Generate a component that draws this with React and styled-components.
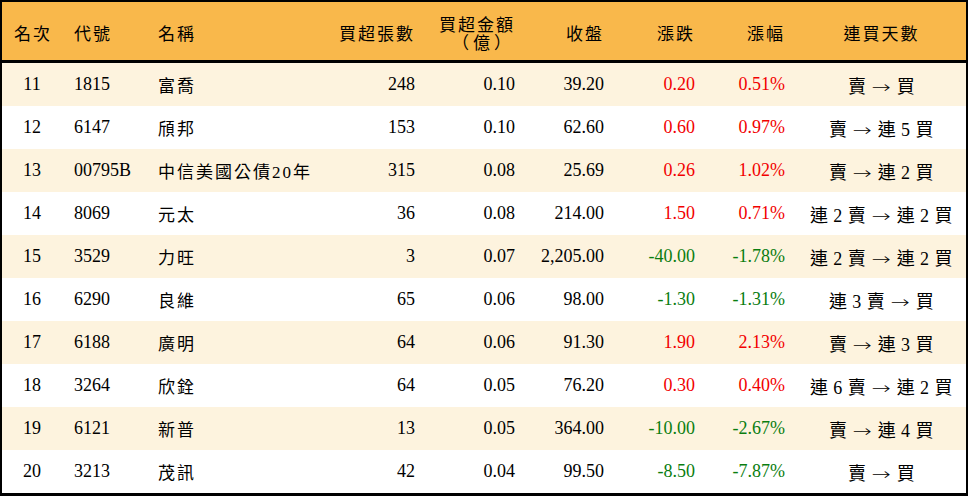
import React from 'react';
import styled, { createGlobalStyle } from 'styled-components';

const GlobalStyle = createGlobalStyle`
    html, body {
        margin: 0;
        padding: 0;
        background: #ffffff;
    }
    body {
        font-family: "Liberation Serif", "Noto Sans CJK TC", serif;
    }
`;

const columns = [
    { key: 'rank', label: '名次', width: 60, align: 'center' },
    { key: 'code', label: '代號', width: 84, align: 'left' },
    { key: 'name', label: '名稱', width: 174, align: 'left' },
    { key: 'lots', label: '買超張數', width: 107, align: 'right' },
    { key: 'amount', label: ['買超金額', '（億）'], width: 100, align: 'right' },
    { key: 'close', label: '收盤', width: 89, align: 'right' },
    { key: 'change', label: '漲跌', width: 91, align: 'right' },
    { key: 'pct', label: '漲幅', width: 90, align: 'right' },
    { key: 'streak', label: '連買天數', width: 169, align: 'center' },
];

const rows = [
    [11, '1815', '富喬', '248', '0.10', '39.20', '0.20', '0.51%', '賣 → 買'],
    [12, '6147', '頎邦', '153', '0.10', '62.60', '0.60', '0.97%', '賣 → 連 5 買'],
    [13, '00795B', '中信美國公債20年', '315', '0.08', '25.69', '0.26', '1.02%', '賣 → 連 2 買'],
    [14, '8069', '元太', '36', '0.08', '214.00', '1.50', '0.71%', '連 2 賣 → 連 2 買'],
    [15, '3529', '力旺', '3', '0.07', '2,205.00', '-40.00', '-1.78%', '連 2 賣 → 連 2 買'],
    [16, '6290', '良維', '65', '0.06', '98.00', '-1.30', '-1.31%', '連 3 賣 → 買'],
    [17, '6188', '廣明', '64', '0.06', '91.30', '1.90', '2.13%', '賣 → 連 3 買'],
    [18, '3264', '欣銓', '64', '0.05', '76.20', '0.30', '0.40%', '連 6 賣 → 連 2 買'],
    [19, '6121', '新普', '13', '0.05', '364.00', '-10.00', '-2.67%', '賣 → 連 4 買'],
    [20, '3213', '茂訊', '42', '0.04', '99.50', '-8.50', '-7.87%', '賣 → 買'],
];

const toneOf = (value) => (value.startsWith('-') ? 'down' : 'up');

const Streak = ({ text }) => {
    const [from, to] = text.split(' → ');
    return (
        <>
            {from} <Arrow>→</Arrow> {to}
        </>
    );
};

const App = () => {
    return (
        <>
            <GlobalStyle />
            <Table>
                <colgroup>
                    {columns.map((c) => (
                        <col key={c.key} style={{ width: c.width }} />
                    ))}
                </colgroup>
                <thead>
                    <HeadRow>
                        {columns.map((c) => (
                            <HeadCell key={c.key} $align={c.align}>
                                {Array.isArray(c.label)
                                    ? c.label.map((line, n) => (
                                          <HeadLine key={line} $sub={n > 0}>{line}</HeadLine>
                                      ))
                                    : c.label}
                            </HeadCell>
                        ))}
                    </HeadRow>
                </thead>
                <tbody>
                    {rows.map((r, i) => (
                        <Row key={r[0]} $striped={i % 2 === 0}>
                            <Cell $align="center">{r[0]}</Cell>
                            <Cell $align="left">{r[1]}</Cell>
                            <NameCell $align="left">{r[2]}</NameCell>
                            <Cell $align="right">{r[3]}</Cell>
                            <Cell $align="right">{r[4]}</Cell>
                            <Cell $align="right">{r[5]}</Cell>
                            <Cell $align="right" $tone={toneOf(r[6])}>{r[6]}</Cell>
                            <Cell $align="right" $tone={toneOf(r[7])}>{r[7]}</Cell>
                            <StreakCell $align="center">
                                <Streak text={r[8]} />
                            </StreakCell>
                        </Row>
                    ))}
                </tbody>
            </Table>
        </>
    );
};

const Table = styled.table`
    width: 968px;
    height: 496px;
    table-layout: fixed;
    border-collapse: separate;
    border-spacing: 0;
    border-top: 2px solid #000;
    border-left: 2px solid #000;
    border-right: 2px solid #000;
    border-bottom: 3px solid #000;
    box-sizing: border-box;
    font-family: "Liberation Serif", "Noto Sans CJK TC", serif;
    font-size: 18px;
    color: #000;
`;

const HeadRow = styled.tr`
    height: 61px;
    background-color: #f9b84b;
`;

const HeadCell = styled.th`
    padding: 7px 12px 0;
    text-align: ${(p) => p.$align};
    font-weight: normal;
    font-size: 17px;
    letter-spacing: 2px;
    line-height: 18px;
    border-bottom: 3px solid #000;
    vertical-align: middle;
    white-space: nowrap;
`;

const HeadLine = styled.div`
    display: block;
    line-height: 18px;
    letter-spacing: ${(p) => (p.$sub ? '4px' : '2px')};
    padding-right: ${(p) => (p.$sub ? '0' : '0')};
`;

const Row = styled.tr`
    height: 43px;
    background-color: ${(p) => (p.$striped ? '#fdf3de' : '#ffffff')};
`;

const Cell = styled.td`
    padding: 0 12px;
    text-align: ${(p) => p.$align};
    vertical-align: middle;
    white-space: nowrap;
    color: ${(p) => (p.$tone === 'up' ? '#f20000' : p.$tone === 'down' ? '#0a7d10' : '#000')};
`;

const NameCell = styled(Cell)`
    font-size: 17px;
    letter-spacing: 2px;
`;

const StreakCell = styled(Cell)`
    font-size: 18px;
    letter-spacing: 0.5px;
`;

const Arrow = styled.span`
    font-family: "DejaVu Sans", sans-serif;
    font-weight: 200;
    font-size: 17px;
    letter-spacing: 0;
    display: inline-block;
    transform: scaleX(1.35);
    margin: 0 3px;
`;

export default App;
